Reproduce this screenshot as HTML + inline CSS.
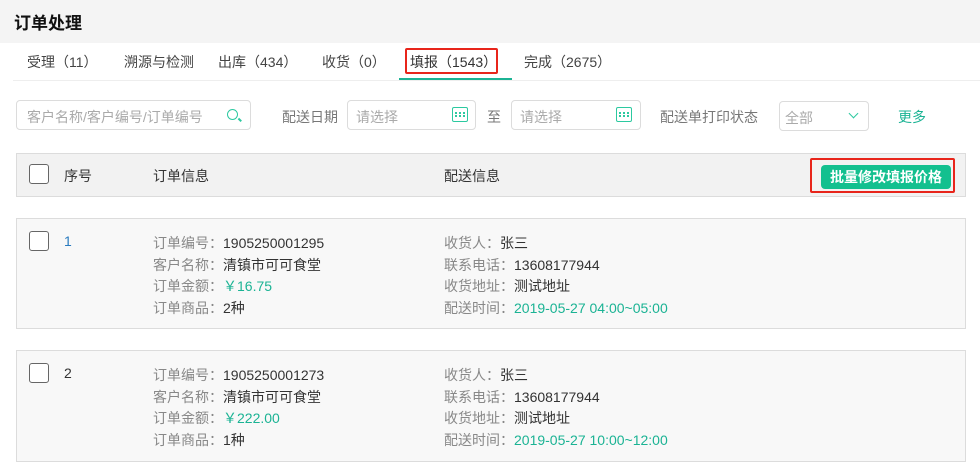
<html><head><style>
body{margin:0;width:980px;height:470px;background:#fff;font-family:"Liberation Sans","Noto Sans CJK SC",sans-serif;font-size:14px;color:#333;position:relative;overflow:hidden}
.a{position:absolute;white-space:nowrap}
.g{color:#888}.t{color:#1bb394}
.box{position:absolute;border:1px solid #dcdcdc;border-radius:4px;background:#fff;height:28px}
.cb{position:absolute;width:18px;height:18px;border:1px solid #666;border-radius:3px;background:#fff}
.cal{position:absolute;width:14px;height:13px;border:1.5px solid #2cc9a0;border-radius:2px}
.cal:before{content:"";position:absolute;left:2px;top:4px;width:10px;height:5px;border-top:2px dotted #2cc9a0;border-bottom:2px dotted #2cc9a0;box-sizing:border-box}
</style></head><body>
<div class="a" style="left:0;top:0;width:980px;height:43px;background:#f4f4f4"></div>
<div class="a" style="left:14px;top:9px;font-size:17px;font-weight:bold;color:#111">订单处理</div>
<div class="a" style="left:13px;top:80px;width:967px;height:1px;background:#eee"></div>
<div class="a" style="left:399px;top:78px;width:113px;height:2px;background:#1bb394"></div>
<div class="a" style="top:52px;left:27px;color:#444">受理（11）</div>
<div class="a" style="top:52px;left:124px;color:#444">溯源与检测</div>
<div class="a" style="top:52px;left:218px;color:#444">出库（434）</div>
<div class="a" style="top:52px;left:322px;color:#444">收货（0）</div>
<div class="a" style="top:52px;left:410px;color:#333">填报（1543）</div>
<div class="a" style="left:405px;top:48px;width:89px;height:22px;border:2px solid #e8251b;border-radius:2px"></div>
<div class="a" style="top:52px;left:524px;color:#444">完成（2675）</div>

<div class="box" style="left:16px;top:100px;width:233px"></div>
<div class="a g" style="left:27px;top:107px;color:#aaa">客户名称/客户编号/订单编号</div>
<div class="a" style="left:227px;top:109px;width:9px;height:9px;border:1.5px solid #2cc9a0;border-radius:50%"></div>
<div class="a" style="left:238px;top:119px;width:4px;height:1.5px;background:#2cc9a0;transform:rotate(45deg)"></div>
<div class="a g" style="left:282px;top:107px;color:#777">配送日期</div>
<div class="box" style="left:347px;top:100px;width:127px"></div>
<div class="a" style="left:356px;top:107px;color:#aaa">请选择</div>
<div class="cal" style="left:452px;top:107px"></div>
<div class="a" style="left:487px;top:107px;color:#777">至</div>
<div class="box" style="left:511px;top:100px;width:128px"></div>
<div class="a" style="left:520px;top:107px;color:#aaa">请选择</div>
<div class="cal" style="left:616px;top:107px"></div>
<div class="a" style="left:660px;top:107px;color:#777">配送单打印状态</div>
<div class="box" style="left:779px;top:101px;width:88px"></div>
<div class="a" style="left:785px;top:108px;color:#aaa">全部</div>
<div class="a" style="left:850px;top:110px;width:6px;height:6px;border-right:1.5px solid #2cc9a0;border-bottom:1.5px solid #2cc9a0;transform:rotate(45deg)"></div>
<div class="a t" style="left:898px;top:107px">更多</div>

<div class="a" style="left:16px;top:153px;width:948px;height:42px;background:#f2f2f2;border:1px solid #dcdcdc"></div>
<div class="cb" style="left:29px;top:164px"></div>
<div class="a" style="left:64px;top:166px">序号</div>
<div class="a" style="left:153px;top:166px">订单信息</div>
<div class="a" style="left:444px;top:166px">配送信息</div>
<div class="a" style="left:810px;top:158px;width:145px;height:35px;border:2px solid #e8251b;border-radius:2px;box-sizing:border-box"></div>
<div class="a" style="left:821px;top:165px;width:130px;height:24px;background:#13c08f;border-radius:4px;color:#fff;font-weight:bold;text-align:center;line-height:24px">批量修改填报价格</div>

<div class="a" style="left:16px;top:218px;width:948px;height:109px;background:#f8f8f8;border:1px solid #dcdcdc"></div>
<div class="cb" style="left:29px;top:231px"></div>
<div class="a" style="left:64px;top:233px;color:#2a7bbf">1</div>
<div class="a" style="left:153px;top:233px;line-height:21.5px"><span class="g">订单编号：</span>1905250001295<br><span class="g">客户名称：</span>清镇市可可食堂<br><span class="g">订单金额：</span><span class="t">￥16.75</span><br><span class="g">订单商品：</span>2种</div>
<div class="a" style="left:444px;top:233px;line-height:21.5px"><span class="g">收货人：</span>张三<br><span class="g">联系电话：</span>13608177944<br><span class="g">收货地址：</span>测试地址<br><span class="g">配送时间：</span><span class="t">2019-05-27 04:00~05:00</span></div>

<div class="a" style="left:16px;top:350px;width:948px;height:110px;background:#f8f8f8;border:1px solid #dcdcdc"></div>
<div class="cb" style="left:29px;top:363px"></div>
<div class="a" style="left:64px;top:365px;color:#333">2</div>
<div class="a" style="left:153px;top:365px;line-height:21.5px"><span class="g">订单编号：</span>1905250001273<br><span class="g">客户名称：</span>清镇市可可食堂<br><span class="g">订单金额：</span><span class="t">￥222.00</span><br><span class="g">订单商品：</span>1种</div>
<div class="a" style="left:444px;top:365px;line-height:21.5px"><span class="g">收货人：</span>张三<br><span class="g">联系电话：</span>13608177944<br><span class="g">收货地址：</span>测试地址<br><span class="g">配送时间：</span><span class="t">2019-05-27 10:00~12:00</span></div>
</body></html>
